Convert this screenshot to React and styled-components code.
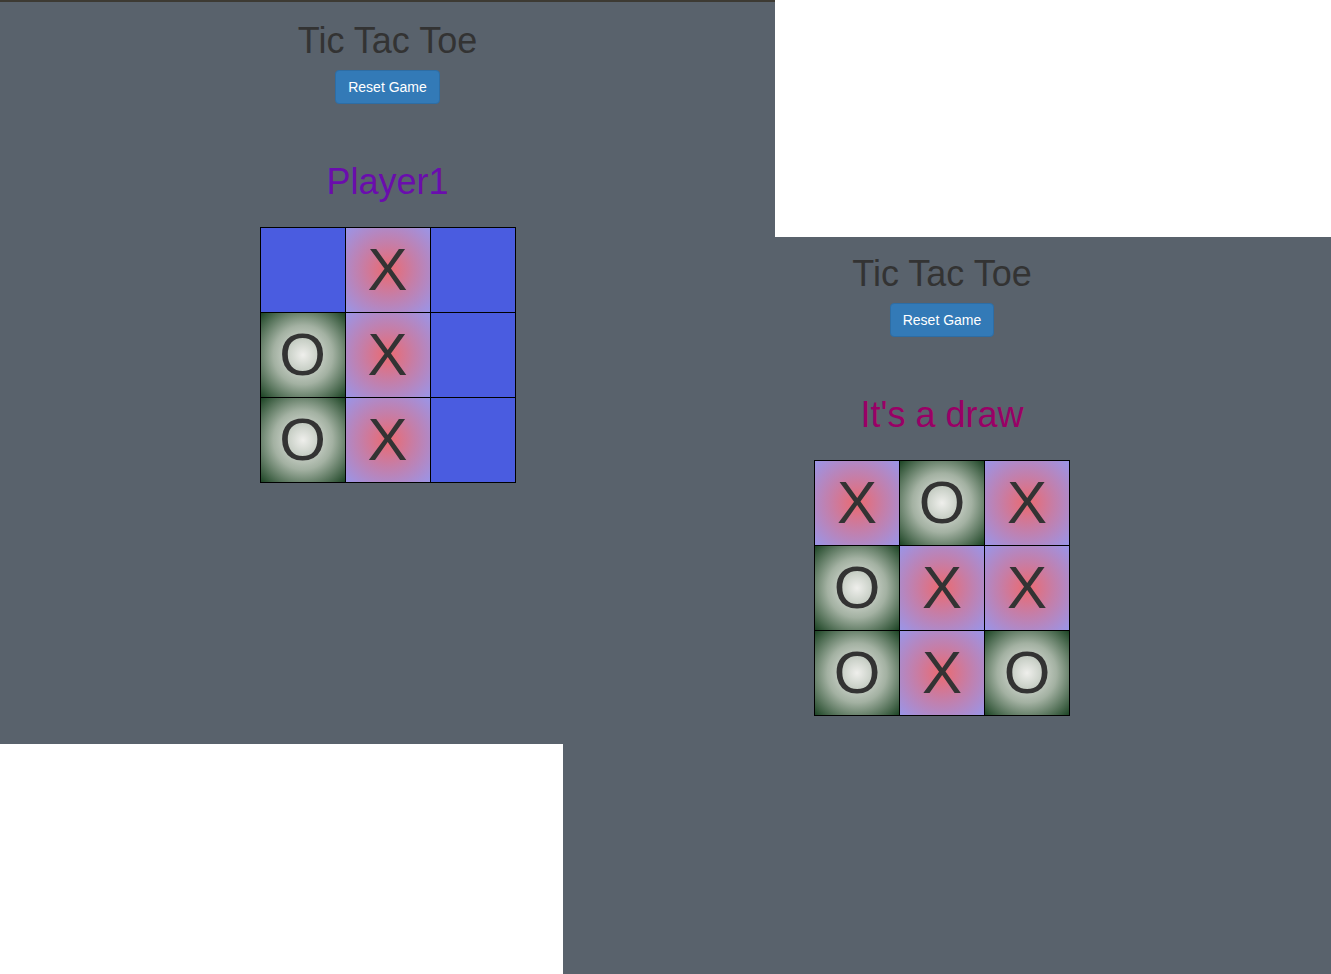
import React from 'react';
import styled, { createGlobalStyle, css } from 'styled-components';

const GlobalStyle = createGlobalStyle`
  html, body {
    margin: 0;
    padding: 0;
    background: #ffffff;
    font-family: "Liberation Sans", Arial, Helvetica, sans-serif;
  }
  #root {
    position: relative;
    width: 1331px;
    height: 974px;
    overflow: hidden;
  }
`;

// Two game windows, overlapping like screenshots on a desktop
const Window = styled.div`
  position: absolute;
  left: ${(p) => p.$left}px;
  top: ${(p) => p.$top}px;
  width: ${(p) => p.$width}px;
  height: ${(p) => p.$height}px;
  z-index: ${(p) => p.$z};
  box-sizing: border-box;
  background: #59626c;
  padding-top: ${(p) => p.$offset}px;
  padding-right: ${(p) => p.$padRight}px;
  ${(p) =>
    p.$topLine &&
    css`
      border-top: 2px solid #3d3a33;
    `}
`;

const Game = styled.div`
  display: flex;
  flex-direction: column;
  align-items: center;
`;

const Title = styled.h1`
  margin: 17px 0 0;
  font-size: 36px;
  line-height: 40px;
  font-weight: 400;
  color: #333333;
`;

const ResetButton = styled.button`
  margin-top: 9px;
  padding: 6px 12px;
  font-family: inherit;
  font-size: 14px;
  line-height: 20px;
  color: #ffffff;
  background-color: #337ab7;
  border: 1px solid #2e6da4;
  border-radius: 4px;
  cursor: pointer;
`;

const Status = styled.div`
  margin-top: 58px;
  font-size: 36px;
  line-height: 40px;
  color: ${(p) => p.$color};
`;

const Board = styled.div`
  margin-top: 25px;
  display: grid;
  grid-template-columns: repeat(3, 84px);
  grid-template-rows: repeat(3, 84px);
  gap: 1px;
  padding: 1px;
  background: #000000;
`;

const cellBackgrounds = {
  X: 'radial-gradient(#ec6a70 0%, #c57ea8 45%, #9a95e8 100%)',
  O: 'radial-gradient(#efefec 0%, #a3b1a2 50%, #1c4424 100%)',
  '': '#4a5ce0',
};

const Cell = styled.div`
  display: flex;
  align-items: center;
  justify-content: center;
  background: ${(p) => cellBackgrounds[p.$mark]};
  font-size: 60px;
  line-height: 1;
  color: #333333;
`;

const TicTacToe = ({ status, statusColor, cells }) => (
  <Game>
    <Title>Tic Tac Toe</Title>
    <ResetButton>Reset Game</ResetButton>
    <Status $color={statusColor}>{status}</Status>
    <Board>
      {cells.map((mark, i) => (
        <Cell key={i} $mark={mark}>
          {mark}
        </Cell>
      ))}
    </Board>
  </Game>
);

const App = () => (
  <>
    <GlobalStyle />
    <Window $left={0} $top={0} $width={775} $height={744} $z={2} $offset={2} $padRight={0} $topLine>
      <TicTacToe
        status="Player1"
        statusColor="#6a0dad"
        cells={['', 'X', '', 'O', 'X', '', 'O', 'X', '']}
      />
    </Window>
    <Window $left={563} $top={237} $width={768} $height={737} $z={1} $offset={0} $padRight={10}>
      <TicTacToe
        status="It's a draw"
        statusColor="#990066"
        cells={['X', 'O', 'X', 'O', 'X', 'X', 'O', 'X', 'O']}
      />
    </Window>
  </>
);

export default App;
